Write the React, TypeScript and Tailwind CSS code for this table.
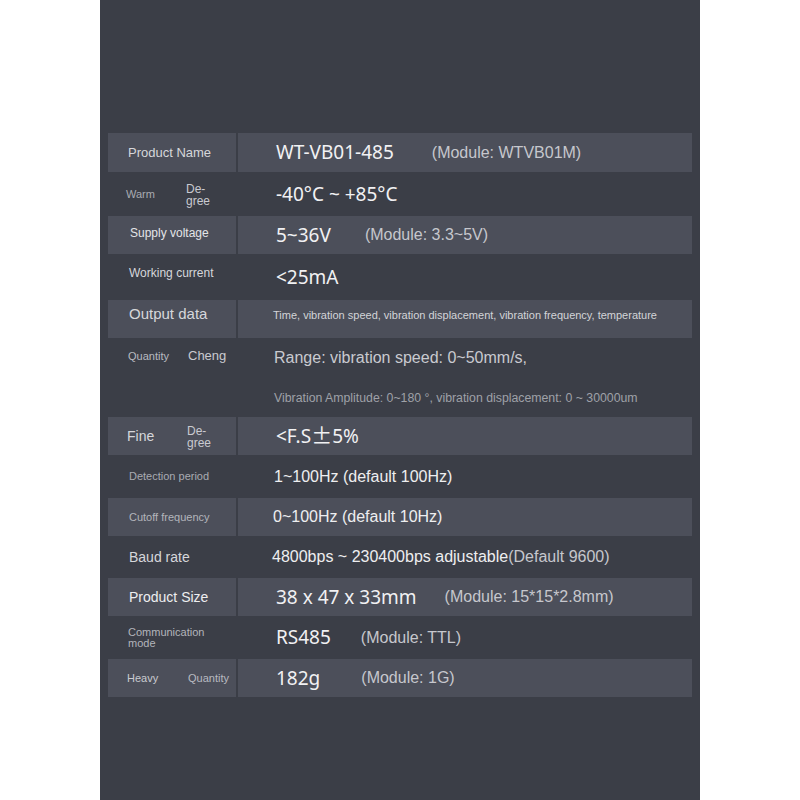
import type { ReactNode } from "react";

type Row = {
  h: string;
  light?: boolean;
  left: ReactNode;
  right: ReactNode;
};

const arial = "font-['Liberation_Sans',Arial,sans-serif]";
const noto = "font-['Noto_Sans','Open_Sans',sans-serif]";

function Split({ a, b, aCls, bCls }: { a: string; b: ReactNode; aCls: string; bCls: string }) {
  return (
    <div className="flex items-center">
      <span className={`w-[60px] shrink-0 ${aCls}`}>{a}</span>
      <span className={bCls}>{b}</span>
    </div>
  );
}

function Deg() {
  return (
    <span className="flex flex-col text-[12px] leading-[12px] text-[#c9cad0]">
      <span>De-</span>
      <span>gree</span>
    </span>
  );
}

function Value({ v, mod, gap }: { v: ReactNode; mod?: string; gap?: string }) {
  return (
    <div className="flex items-center">
      <span className={`${noto} text-[19px] text-[#f1f1f3]`}>{v}</span>
      {mod && (
        <span className={`${arial} text-[16px] text-[#c6c7cd] ${gap ?? "ml-[32px]"}`}>
          {mod}
        </span>
      )}
    </div>
  );
}

const rows: Row[] = [
  {
    h: "h-[39px]",
    light: true,
    left: <span className="pl-[20px] text-[13px] text-[#d6d7db]">Product Name</span>,
    right: <Value v="WT-VB01-485" mod="(Module: WTVB01M)" gap="ml-[38px]" />,
  },
  {
    h: "h-[44px]",
    left: (
      <div className="pl-[18px]">
        <Split a="Warm" b={<Deg />} aCls="text-[11px] text-[#a9abb2]" bCls="pt-[2px]" />
      </div>
    ),
    right: <Value v="-40°C ~ +85°C" />,
  },
  {
    h: "h-[38px]",
    light: true,
    left: <span className="pl-[22px] pb-[4px] text-[12px] text-[#e4e5e8]">Supply voltage</span>,
    right: <Value v="5~36V" mod="(Module: 3.3~5V)" gap="ml-[34px]" />,
  },
  {
    h: "h-[46px]",
    left: <span className="pl-[21px] pb-[8px] text-[12px] text-[#d6d7db]">Working current</span>,
    right: <Value v="<25mA" />,
  },
  {
    h: "h-[38px]",
    light: true,
    left: <span className="pl-[21px] pb-[10px] text-[15px] text-[#d6d7db]">Output data</span>,
    right: (
      <span className="-ml-[3px] pb-[8px] text-[11px] text-[#d3d4d8]">
        Time, vibration speed, vibration displacement, vibration frequency, temperature
      </span>
    ),
  },
  {
    h: "h-[79px]",
    left: (
      <div className="self-start pl-[20px] pt-[8px]">
        <Split
          a="Quantity"
          b="Cheng"
          aCls="w-[59px] text-[11px] text-[#b8bac0]"
          bCls="text-[13px] text-[#c9cad0]"
        />
      </div>
    ),
    right: (
      <div className="-ml-[2px] flex flex-col self-start pt-[8px]">
        <span className="text-[16px] text-[#c9cad0]">Range: vibration speed: 0~50mm/s,</span>
        <span className="mt-[19px] text-[12.3px] text-[#9fa1a8]">
          Vibration Amplitude: 0~180 °, vibration displacement: 0 ~ 30000um
        </span>
      </div>
    ),
  },
  {
    h: "h-[38px]",
    light: true,
    left: (
      <div className="pl-[19px]">
        <Split a="Fine" b={<Deg />} aCls="text-[14px] text-[#d6d7db]" bCls="pt-[2px]" />
      </div>
    ),
    right: (
      <Value
        v={
          <>
            &lt;F.S
            <span className="font-['Noto_Sans_CJK_SC',sans-serif] text-[21px] leading-none">±</span>
            5%
          </>
        }
      />
    ),
  },
  {
    h: "h-[43px]",
    left: <span className="pl-[21px] text-[11px] text-[#a9abb2]">Detection period</span>,
    right: <span className="-ml-[2px] text-[16px] text-[#eeeef0]">1~100Hz (default 100Hz)</span>,
  },
  {
    h: "h-[38px]",
    light: true,
    left: <span className="pl-[21px] text-[11px] text-[#b3b5bb]">Cutoff frequency</span>,
    right: <span className="-ml-[3px] text-[16px] text-[#eeeef0]">0~100Hz (default 10Hz)</span>,
  },
  {
    h: "h-[42px]",
    left: <span className="pl-[21px] text-[14px] text-[#d6d7db]">Baud rate</span>,
    right: (
      <span className="-ml-[4px] text-[16px] text-[#eeeef0]">
        4800bps ~ 230400bps adjustable<span className="text-[#c6c7cd]">(Default 9600)</span>
      </span>
    ),
  },
  {
    h: "h-[38px]",
    light: true,
    left: <span className="pl-[21px] text-[14px] text-[#eeeef0]">Product Size</span>,
    right: <Value v="38 x 47 x 33mm" mod="(Module: 15*15*2.8mm)" gap="ml-[28px]" />,
  },
  {
    h: "h-[43px]",
    left: (
      <span className="flex flex-col pl-[20px] text-[11px] leading-[10.5px] text-[#b3b5bb]">
        <span>Communication</span>
        <span>mode</span>
      </span>
    ),
    right: <Value v="RS485" mod="(Module: TTL)" gap="ml-[30px]" />,
  },
  {
    h: "h-[38px]",
    light: true,
    left: (
      <div className="pl-[19px]">
        <Split
          a="Heavy"
          b="Quantity"
          aCls="w-[61px] text-[11px] text-[#c9cad0]"
          bCls="text-[11px] text-[#b8bac0]"
        />
      </div>
    ),
    right: <Value v="182g" mod="(Module: 1G)" gap="ml-[41px]" />,
  },
];

export default function App() {
  return (
    <div className={`min-h-[800px] w-[800px] bg-white ${arial}`}>
      <div className="ml-[100px] h-[800px] w-[600px] bg-[#3b3e47] px-[8px] pt-[133px]">
        {rows.map((r, i) => (
          <div key={i} className={`grid grid-cols-[128px_454px] gap-x-[2px] ${r.h}`}>
            <div className={`flex items-center ${r.light ? "bg-[#4c4f5a]" : ""}`}>{r.left}</div>
            <div className={`flex items-center pl-[38px] ${r.light ? "bg-[#4c4f5a]" : ""}`}>
              {r.right}
            </div>
          </div>
        ))}
      </div>
    </div>
  );
}
